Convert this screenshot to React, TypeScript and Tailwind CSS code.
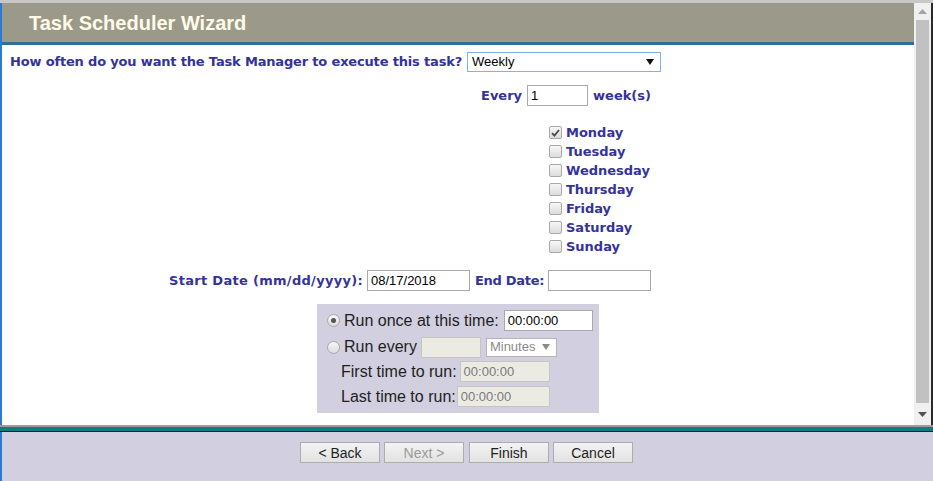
import React from "react";

const DAYS = ["Monday", "Tuesday", "Wednesday", "Thursday", "Friday", "Saturday", "Sunday"];

const label = "font-['DejaVu_Sans',Verdana,sans-serif] font-bold text-[13px] text-[#333399] whitespace-nowrap";
const arial = "font-['Liberation_Sans',Arial,sans-serif]";

function CheckBox({ checked }: { checked?: boolean }) {
  return (
    <span className="flex h-[13px] w-[13px] items-center justify-center rounded-[2px] border border-[#a9a9a9] bg-linear-to-b from-[#f7f7f7] to-[#dcdcdc]">
      {checked && (
        <svg width="9" height="8" viewBox="0 0 9 8">
          <path d="M1 4.2 L3.4 6.6 L8 1" fill="none" stroke="#4a4a4a" strokeWidth="1.8" />
        </svg>
      )}
    </span>
  );
}

function Radio({ checked }: { checked?: boolean }) {
  return (
    <span className="flex h-[13px] w-[13px] items-center justify-center rounded-full border border-[#a9a9a9] bg-linear-to-b from-[#f7f7f7] to-[#dcdcdc]">
      {checked && <span className="h-[5px] w-[5px] rounded-full bg-[#555]" />}
    </span>
  );
}

function TextBox({ value, w, disabled }: { value?: string; w: string; disabled?: boolean }) {
  return (
    <div
      className={`${w} flex h-[21px] items-center border px-[3px] text-[13px] ${arial} ${
        disabled ? "border-[#c6c6c0] bg-[#ebebe4] text-[#7a7a7a]" : "border-[#a9a9a9] bg-white text-black"
      }`}
    >
      {value}
    </div>
  );
}

function Arrow({ color }: { color: string }) {
  return (
    <svg width="8" height="6" viewBox="0 0 8 6">
      <path d="M0 0 H8 L4 6 Z" fill={color} />
    </svg>
  );
}

function Btn({ children, disabled, extra }: { children: React.ReactNode; disabled?: boolean; extra?: string }) {
  return (
    <button
      className={`h-[21px] w-[80px] border border-[#adadad] bg-linear-to-b from-[#f3f3f3] to-[#e2e2e2] text-[14px] ${arial} ${
        disabled ? "text-[#9a9a9a]" : "text-[#1e1e1e]"
      } ${extra ?? ""}`}
    >
      {children}
    </button>
  );
}

export default function App() {
  return (
    <div className="flex h-[481px] w-[933px] flex-col overflow-hidden bg-white">
      <div className="h-[3px] bg-[#c8c8c8]" />
      <div className="flex flex-1 border-l-2 border-[#2b7bd5]">
        <div className="flex h-[422px] flex-1 flex-col">
          <div className="flex h-[39px] items-center bg-[#9b998a] pl-[27px]">
            <span className={`${arial} text-[20px] font-bold text-[#fffbe8]`}>Task Scheduler Wizard</span>
          </div>
          <div className="h-[3px] bg-[#2f6e98]" />
          <div className="flex flex-col pt-[7px]">
            <div className="flex h-[20px] items-center gap-[5px] pl-[8px]">
              <span className={`${label} tracking-[-0.17px]`}>How often do you want the Task Manager to execute this task?</span>
              <div className={`flex h-[20px] w-[194px] items-center justify-between border border-[#7eb4ea] bg-white pl-[4px] pr-[6px] text-[13px] text-black ${arial}`}>
                Weekly
                <Arrow color="#111" />
              </div>
            </div>

            <div className="mt-[13px] flex items-center gap-[5px] pl-[479px]">
              <span className={label}>Every</span>
              <TextBox value="1" w="w-[61px]" />
              <span className={label}>week(s)</span>
            </div>

            <div className="mt-[17px] flex flex-col pl-[547px]">
              {DAYS.map((d, i) => (
                <div key={d} className="flex h-[19px] items-center gap-[4px]">
                  <CheckBox checked={i === 0} />
                  <span className={label}>{d}</span>
                </div>
              ))}
            </div>

            <div className="mt-[14px] flex items-center gap-[4px] pl-[167px]">
              <span className={`${label} tracking-[0.3px]`}>Start Date (mm/dd/yyyy):</span>
              <TextBox value="08/17/2018" w="w-[103px]" />
              <span className={`${label} ml-[1px] tracking-[-0.3px]`}>End Date:</span>
              <TextBox w="w-[103px]" />
            </div>

            <div className="ml-[315px] mt-[13px] flex w-[282px] flex-col bg-[#d2cfe0] pb-[6px] pl-[10px] pt-[6px] text-[16px] text-[#1e1e1e]">
              <div className={`flex h-[21px] items-center ${arial}`}>
                <Radio checked />
                <span className="ml-[4px] mr-[5px]">Run once at this time:</span>
                <TextBox value="00:00:00" w="w-[89px]" />
              </div>
              <div className={`mt-[6px] flex h-[20px] items-center ${arial}`}>
                <Radio />
                <span className="ml-[4px] mr-[4px]">Run every</span>
                <TextBox w="w-[60px]" disabled />
                <div className="ml-[5px] flex h-[19px] w-[71px] items-center justify-between border border-[#b5b5b5] bg-white pl-[3px] pr-[6px] text-[13px] text-[#8a8a8a]">
                  Minutes
                  <Arrow color="#8a8a8a" />
                </div>
              </div>
              <div className={`mt-[4px] flex h-[21px] items-center pl-[14px] ${arial}`}>
                <span className="mr-[3px]">First time to run:</span>
                <TextBox value="00:00:00" w="w-[90px]" disabled />
              </div>
              <div className={`mt-[4px] flex h-[21px] items-center pl-[14px] ${arial}`}>
                <span className="mr-[1px]">Last time to run:</span>
                <TextBox value="00:00:00" w="w-[93px]" disabled />
              </div>
            </div>
          </div>
        </div>

        <div className="flex h-[422px] w-[17px] flex-col items-center bg-[#f0f0f0]">
          <div className="flex h-[17px] items-center justify-center">
            <svg width="9" height="5" viewBox="0 0 9 5">
              <path d="M0 5 L4.5 0 L9 5 Z" fill="#a3a3a3" />
            </svg>
          </div>
          <div className="h-[383px] w-[13px] bg-[#c1c1c1]" />
          <div className="flex h-[22px] items-center justify-center">
            <svg width="9" height="5" viewBox="0 0 9 5">
              <path d="M0 0 L9 0 L4.5 5 Z" fill="#505050" />
            </svg>
          </div>
        </div>
        <div className="w-[2px] bg-[#2a2a2a]" />
      </div>

      <div className="h-[2px] bg-[#9c9c9c]" />
      <div className="h-[4px] bg-[#0e7f7c]" />
      <div className="h-[1px] bg-[#1c1c1c]" />
      <div className="flex h-[49px] justify-center border-l-2 border-[#2b7bd5] bg-[#d2cfe0] pr-[2px] pt-[10px]">
        <Btn extra="mr-[4px]">&lt; Back</Btn>
        <Btn disabled extra="mr-[5px]">Next &gt;</Btn>
        <Btn extra="mr-[4px]">Finish</Btn>
        <Btn>Cancel</Btn>
      </div>
    </div>
  );
}
